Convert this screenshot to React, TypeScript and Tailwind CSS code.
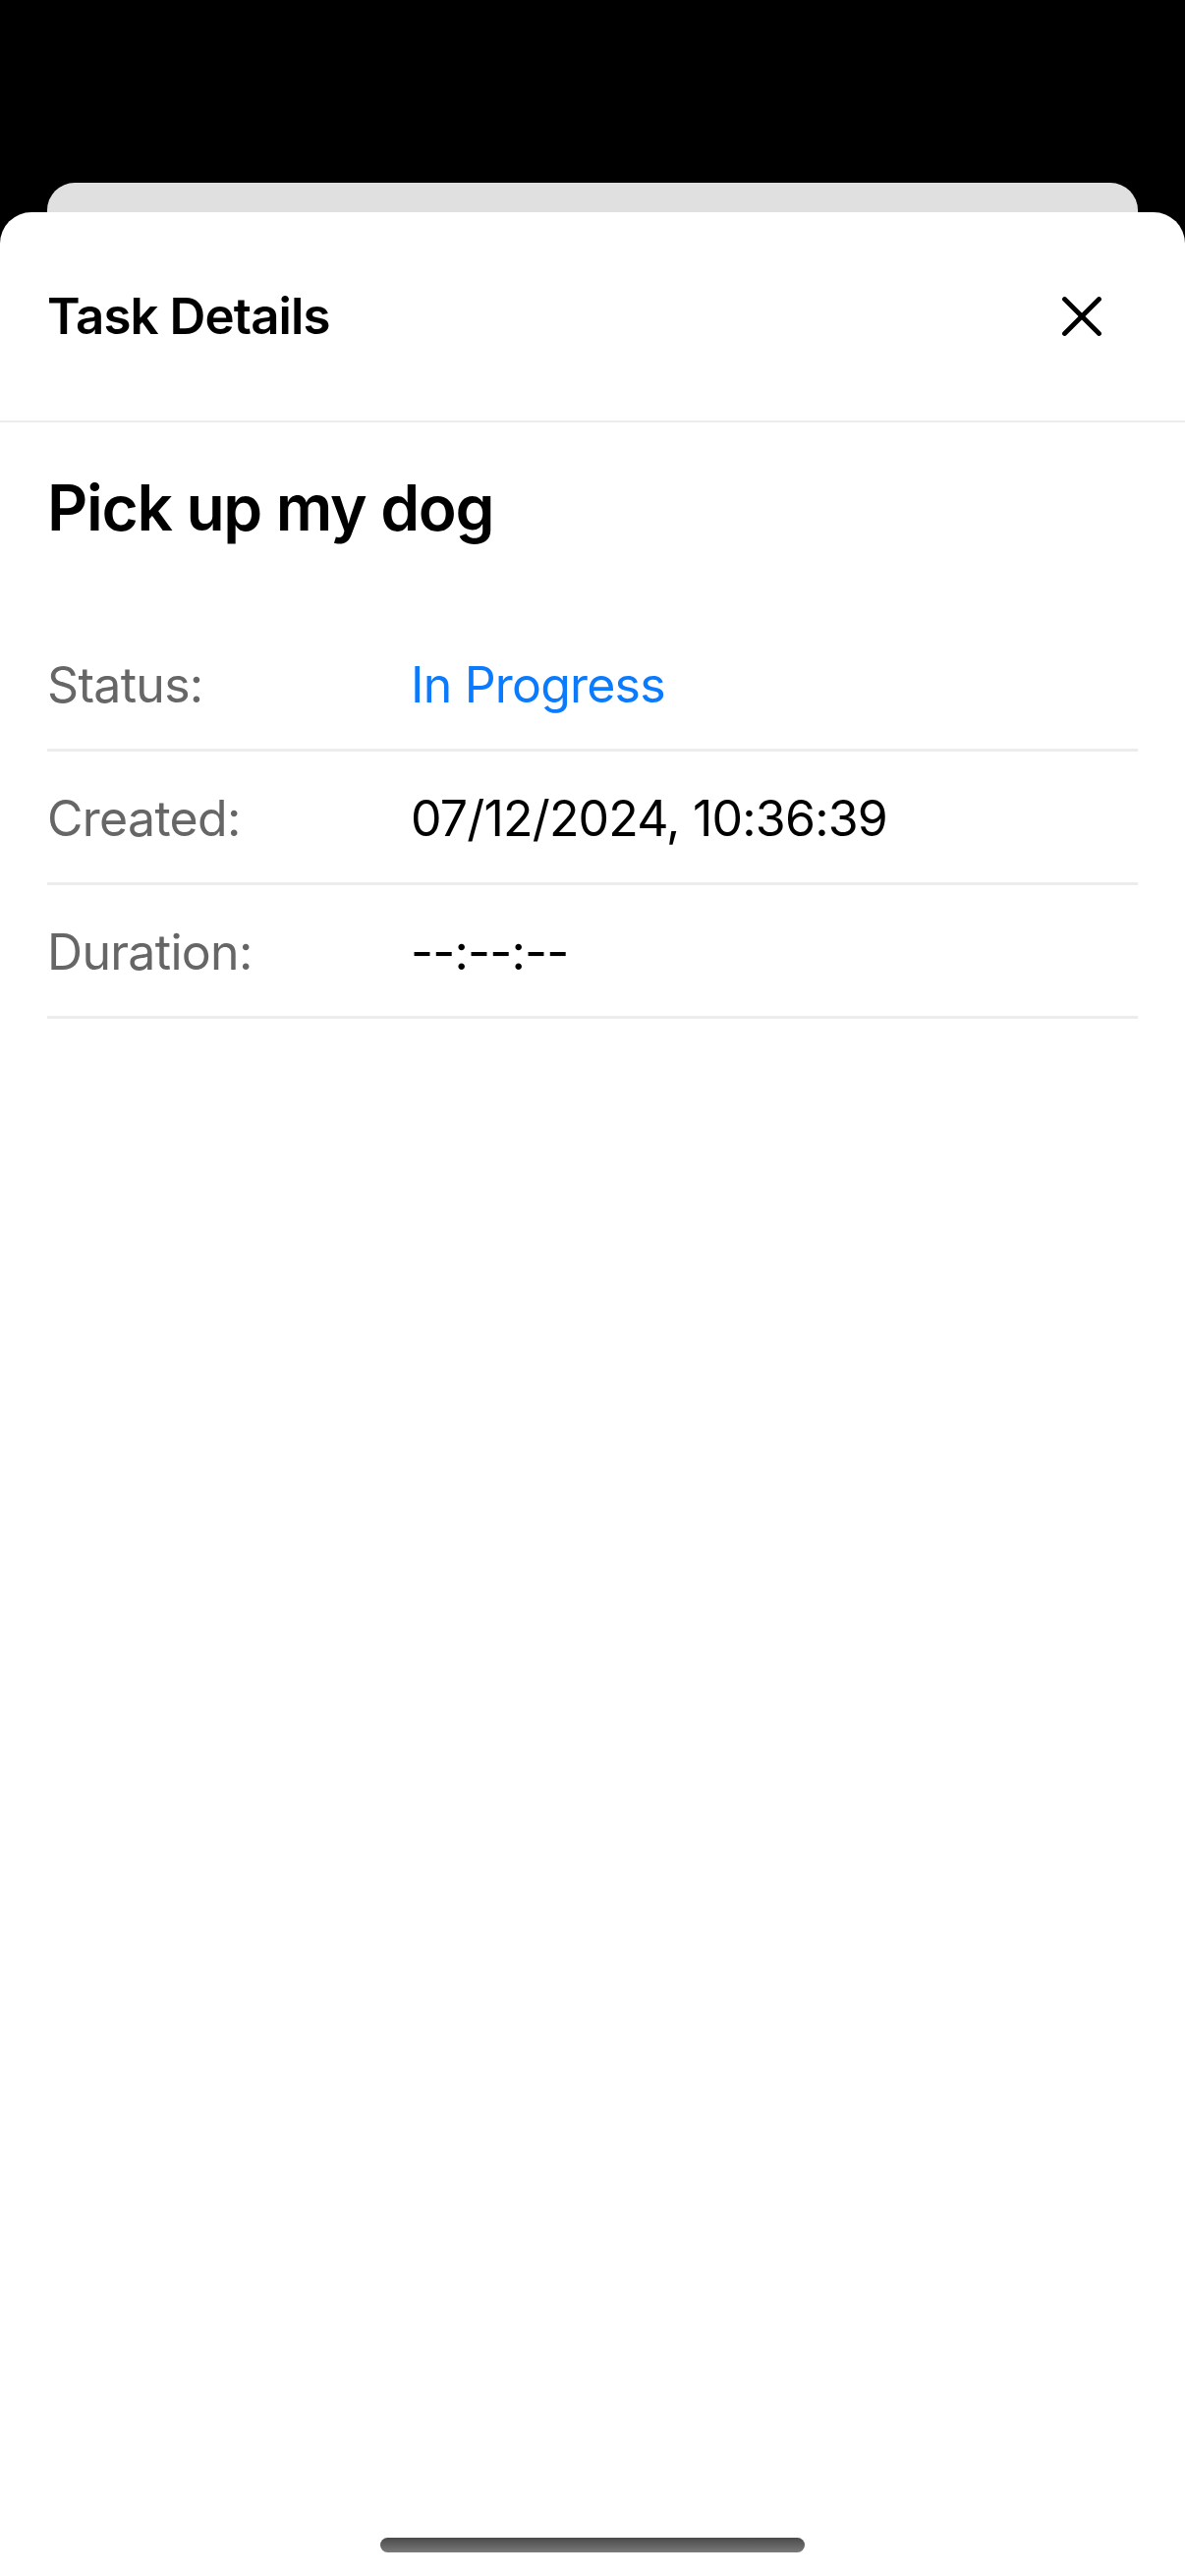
const rows = [
  { label: 'Status:', value: 'In Progress', tone: 'text-[#0a7aff]' },
  { label: 'Created:', value: '07/12/2024, 10:36:39', tone: 'text-black' },
  { label: 'Duration:', value: '--:--:--', tone: 'text-black' },
];

function CloseIcon() {
  return (
    <svg width="40" height="40" viewBox="0 0 40 40" fill="none" stroke="#000" strokeWidth="4.8" strokeLinecap="round">
      <path d="M2.5 2.5 L37.5 37.5" />
      <path d="M37.5 2.5 L2.5 37.5" />
    </svg>
  );
}

export default function App() {
  return (
    <div className="flex min-h-[2622px] flex-col bg-black font-['Inter',sans-serif]">
      {/* stacked card peeking from behind */}
      <div className="mx-[48px] mt-[186px] h-[30px] rounded-t-[28px] bg-[#e0e0e0]" />

      <div className="flex flex-1 flex-col rounded-t-[32px] bg-white">
        <div className="flex h-[214px] items-center justify-between border-b-2 border-[#ececec] pl-[48px] pr-[85px]">
          <h1 className="text-[51px] font-semibold tracking-[-0.9px] text-black">Task Details</h1>
          <button className="flex items-center justify-center">
            <CloseIcon />
          </button>
        </div>

        <div className="px-[48px] pt-[47px]">
          <h2 className="mb-[72px] text-[64px] font-semibold leading-[80px] tracking-[-1.3px] text-black">
            Pick up my dog
          </h2>

          {rows.map((row) => (
            <div key={row.label} className="flex h-[136px] items-center border-b-[3px] border-[#ececec] pt-[4px]">
              <span className="w-1/3 text-[50px] tracking-[-0.7px] text-[#666666]">{row.label}</span>
              <span className={`text-[50px] tracking-[-0.8px] ${row.tone}`}>{row.value}</span>
            </div>
          ))}
        </div>

        <div className="mx-auto mb-[24px] mt-auto h-[15px] w-[432px] rounded-full bg-gradient-to-b from-[#4a4a4a] to-[#7a7a7a]" />
      </div>
    </div>
  );
}
